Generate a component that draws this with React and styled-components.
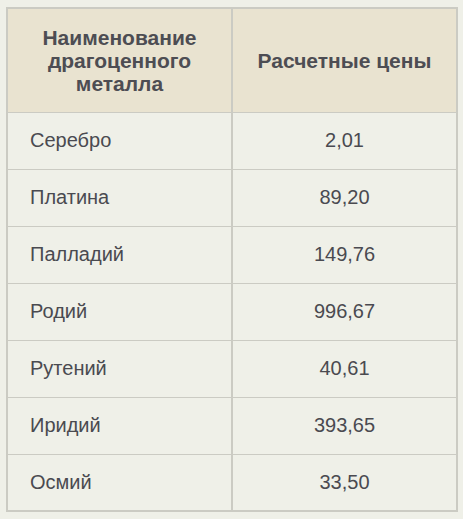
import React from 'react';
import styled, { createGlobalStyle } from 'styled-components';

const GlobalStyle = createGlobalStyle`
  html, body {
    margin: 0;
    padding: 0;
    background: #eff0e8;
  }
  body {
    font-family: "Liberation Sans", Arial, sans-serif;
  }
`;

const Page = styled.div`
  padding: 7px 5px 7px 6px;
`;

const Table = styled.table`
  width: 452px;
  border-collapse: collapse;
  border: 2px solid #cbcbc3;
  background: #eff0e8;
  table-layout: fixed;
`;

const HeadCell = styled.th`
  background: #e9e3d0;
  color: #4d4d53;
  font-size: 21px;
  font-weight: bold;
  line-height: 23px;
  text-align: center;
  height: 104px;
  padding: 0 12px;
  box-sizing: border-box;
  border-right: 2px solid #cbcbc3;
  border-bottom: 1px solid #cbcbc3;

  &:last-child {
    border-right: none;
  }
`;

const Cell = styled.td`
  color: #4a4a50;
  font-size: 20px;
  height: 57px;
  box-sizing: border-box;
  padding: 0 22px;
  text-align: ${(p) => (p.$align === 'center' ? 'center' : 'left')};
  border-right: 2px solid #cbcbc3;
  border-bottom: 1px solid #cbcbc3;

  &:last-child {
    border-right: none;
  }
`;

const rows = [
  ['Серебро', '2,01'],
  ['Платина', '89,20'],
  ['Палладий', '149,76'],
  ['Родий', '996,67'],
  ['Рутений', '40,61'],
  ['Иридий', '393,65'],
  ['Осмий', '33,50'],
];

export default function App() {
  return (
    <Page>
      <GlobalStyle />
      <Table>
        <thead>
          <tr>
            <HeadCell>Наименование драгоценного металла</HeadCell>
            <HeadCell>Расчетные цены</HeadCell>
          </tr>
        </thead>
        <tbody>
          {rows.map(([name, price]) => (
            <tr key={name}>
              <Cell>{name}</Cell>
              <Cell $align="center">{price}</Cell>
            </tr>
          ))}
        </tbody>
      </Table>
    </Page>
  );
}
